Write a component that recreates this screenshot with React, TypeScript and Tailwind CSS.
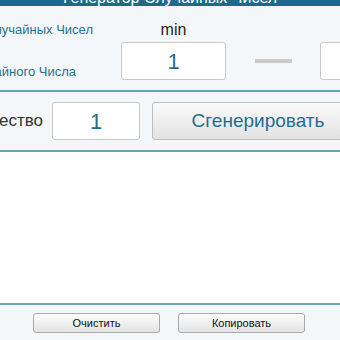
import React from 'react';

const NumberBox = ({ value, className }: { value: string; className: string }) => (
  <div
    className={`flex items-center justify-center rounded-[3px] border border-[#c9c9c9] bg-white text-[22px] text-[#1f6e8e] ${className}`}
  >
    {value}
  </div>
);

const ClipLabel = ({ text, width, className }: { text: string; width: string; className: string }) => (
  <div className={`flex justify-end overflow-hidden whitespace-nowrap ${width} ${className}`}>
    <span>{text}</span>
  </div>
);

const App = () => {
  return (
    <div className="h-[340px] w-[340px] overflow-hidden bg-white font-['Liberation_Sans',Arial,sans-serif]">
      {/* title bar, mostly scrolled off the top */}
      <div className="-mt-[20px] h-[26px] bg-[#1b6a8a] pt-[10px] text-center text-[16px] leading-4 whitespace-nowrap text-white">
        Генератор Случайных Чисел
      </div>

      {/* range */}
      <div className="grid h-[84px] grid-cols-[121px_105px_29px_37px_28px_105px] grid-rows-[36px_38px] bg-[#f4f7f9]">
        <ClipLabel
          text="Диапазон Случайных Чисел"
          width="w-[93px]"
          className="self-end mb-[4px] text-[13px] leading-4 text-[#2a6f8e]"
        />
        <div className="self-end mb-[2px] text-center text-[16px] leading-5 text-[#222]">min</div>
        <div />
        <div />
        <div />
        <div className="self-end mb-[2px] text-center text-[16px] leading-5 text-[#222]">max</div>

        <ClipLabel
          text="Границы Случайного Числа"
          width="w-[76px]"
          className="self-end text-[13px] leading-4 text-[#2a6f8e]"
        />
        <NumberBox value="1" className="h-[38px]" />
        <div />
        <div className="self-center h-[4px] bg-[#cbcbcb]" />
        <div />
        <NumberBox value="100" className="h-[38px]" />
      </div>
      <div className="h-[2px] bg-[#6aa1b6]" />

      {/* count + generate */}
      <div className="flex h-[58px] items-center bg-[#f4f7f9]">
        <ClipLabel text="Количество" width="w-[43px]" className="shrink-0 text-[17px] leading-5 text-[#333]" />
        <NumberBox value="1" className="ml-[9px] h-[38px] w-[88px] shrink-0" />
        <button className="ml-[12px] h-[38px] w-[212px] shrink-0 rounded-[3px] border border-[#bdbdbd] bg-gradient-to-b from-[#fbfbfb] to-[#e2e2e2] text-[19px] text-[#1f6e8e]">
          Сгенерировать
        </button>
      </div>
      <div className="h-[2px] bg-[#6aa1b6]" />

      {/* results */}
      <div className="h-[151px] bg-white" />
      <div className="h-[2px] bg-[#6aa1b6]" />

      <div className="flex h-[40px] gap-[18px] bg-[#f4f7f9] pt-[8px] pl-[33px]">
        <button className="h-[20px] w-[127px] rounded-[3px] border border-[#a9a9a9] bg-gradient-to-b from-[#fdfdfd] to-[#e3e3e3] text-[11px] text-[#111]">
          Очистить
        </button>
        <button className="h-[20px] w-[127px] rounded-[3px] border border-[#a9a9a9] bg-gradient-to-b from-[#fdfdfd] to-[#e3e3e3] text-[11px] text-[#111]">
          Копировать
        </button>
      </div>
    </div>
  );
};

export default App;
